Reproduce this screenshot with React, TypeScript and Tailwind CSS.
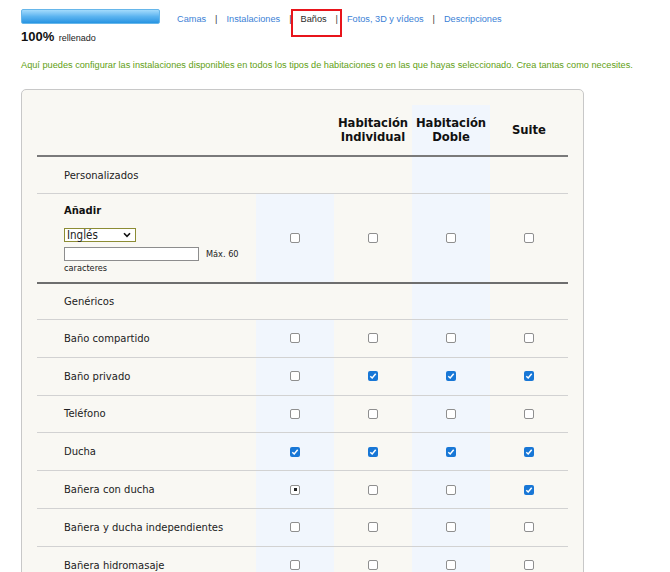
import React from 'react';

type Mark = 0 | 1 | 2;

const ROWS: { label: string; marks: Mark[] }[] = [
  { label: 'Baño compartido', marks: [0, 0, 0, 0] },
  { label: 'Baño privado', marks: [0, 1, 1, 1] },
  { label: 'Teléfono', marks: [0, 0, 0, 0] },
  { label: 'Ducha', marks: [1, 1, 1, 1] },
  { label: 'Bañera con ducha', marks: [2, 0, 0, 1] },
  { label: 'Bañera y ducha independientes', marks: [0, 0, 0, 0] },
  { label: 'Bañera hidromasaje', marks: [0, 0, 0, 0] },
];

const NAV = ['Camas', 'Instalaciones', 'Baños', 'Fotos, 3D y vídeos', 'Descripciones'];

function Box({ mark }: { mark: Mark }) {
  if (mark === 1) {
    return (
      <span className="w-[10px] h-[10px] rounded-[2px] bg-[#1877d6] flex items-center justify-center">
        <svg width="8" height="8" viewBox="0 0 8 8">
          <path d="M1.3 4.2 L3.2 6 L6.7 1.8" fill="none" stroke="#fff" strokeWidth="1.5" />
        </svg>
      </span>
    );
  }
  return (
    <span className="w-[10px] h-[10px] rounded-[2px] border border-[#8f8f8f] bg-white flex items-center justify-center">
      {mark === 2 && <span className="w-[3px] h-[3px] bg-[#222]" />}
    </span>
  );
}

function Cell({ blue, children }: { blue?: boolean; children?: React.ReactNode }) {
  return (
    <div className={`w-[78px] h-full flex items-center justify-center ${blue ? 'bg-[#f1f6fd]' : ''}`}>
      {children}
    </div>
  );
}

function CheckRow({ marks }: { marks: Mark[] }) {
  return (
    <>
      {marks.map((m, i) => (
        <Cell key={i} blue={i === 0 || i === 2}>
          <Box mark={m} />
        </Cell>
      ))}
    </>
  );
}

function SectionRow({ label, className }: { label: string; className: string }) {
  return (
    <div className={`flex ${className}`}>
      <div className="w-[219px] pl-[27px] flex items-center">{label}</div>
      <Cell />
      <Cell />
      <Cell blue />
      <Cell />
    </div>
  );
}

export default function App() {
  return (
    <div className="w-[670px] h-[572px] overflow-hidden bg-white relative font-['Liberation_Sans',Arial,sans-serif] text-[#222]">
      {/* progress + tabs */}
      <div className="flex pl-[21px] pt-[9px] h-[59px]">
        <div className="w-[139px]">
          <div className="h-[15px] rounded-[2px] border border-[#66b6ea] bg-linear-to-b from-[#a3dbfc] via-[#5bb4f0] to-[#2594e2]" />
          <div className="mt-[5px] leading-[13px] whitespace-nowrap">
            <span className="text-[13px] font-bold text-[#111]">100%</span>{' '}
            <span className="text-[9px]">rellenado</span>
          </div>
        </div>
        <nav className="ml-[17px] mt-[4px] h-[12px] flex items-center text-[9.2px] leading-[12px] whitespace-nowrap">
          {NAV.map((n, i) => (
            <React.Fragment key={n}>
              {i > 0 && <span className="mx-[9px] text-[#333]">|</span>}
              <span className={n === 'Baños' ? 'text-[#2a2a2a]' : 'text-[#3c7fd6]'}>{n}</span>
            </React.Fragment>
          ))}
        </nav>
      </div>
      <div className="absolute left-[291px] top-[9px] w-[51px] h-[28px] border-2 border-[#e8141b]" />

      <p className="pl-[21px] text-[9.2px] leading-[12px] text-[#62a013] whitespace-nowrap">
        Aquí puedes configurar las instalaciones disponibles en todos los tipos de habitaciones o en las que hayas seleccionado. Crea tantas como necesites.
      </p>

      {/* panel */}
      <div className="ml-[21px] mt-[18px] w-[563px] border border-[#c8c8c8] rounded-[5px] bg-[#f9f8f3] p-[15px] font-['DejaVu_Sans',Verdana,sans-serif] text-[10px]">
        <div className="w-[531px]">
          <div className="flex h-[52px] border-b-2 border-[#7a7a7a] font-bold text-[11.6px] leading-[14px] text-[#111] text-center">
            <div className="w-[219px]" />
            <Cell />
            <Cell>Habitación<br />Individual</Cell>
            <Cell blue>Habitación<br />Doble</Cell>
            <Cell>Suite</Cell>
          </div>

          <SectionRow label="Personalizados" className="h-[37px] border-b border-[#d2d2d2]" />

          <div className="flex h-[90px] border-b-2 border-[#6e6e6e]">
            <div className="w-[219px] pl-[27px] pt-[11px] flex flex-col">
              <div className="font-bold leading-[12px] text-[#111]">Añadir</div>
              <div className="mt-[11px] w-[72px] h-[14px] border border-[#8c8c34] bg-white flex items-center justify-between pl-[2px] pr-[4px]">
                <span className="font-['DejaVu_Sans_Condensed','DejaVu_Sans',sans-serif] text-[11.5px] leading-[12px]">Inglés</span>
                <svg width="8" height="6" viewBox="0 0 8 6">
                  <path d="M1 1.2 L4 4.3 L7 1.2" fill="none" stroke="#111" strokeWidth="1.6" />
                </svg>
              </div>
              <div className="mt-[5px] flex items-center">
                <div className="w-[135px] h-[14px] border border-[#8d8d8d] bg-white" />
                <span className="ml-[7px] text-[8.2px] leading-[10px]">Máx. 60</span>
              </div>
              <div className="mt-[2px] text-[8.2px] leading-[10px]">caracteres</div>
            </div>
            <CheckRow marks={[0, 0, 0, 0]} />
          </div>

          <SectionRow label="Genéricos" className="h-[36px] border-b border-[#d2d2d2]" />

          {ROWS.map((r) => (
            <div key={r.label} className="flex h-[37.8px] border-b border-[#d2d2d2]">
              <div className="w-[219px] pl-[27px] flex items-center">{r.label}</div>
              <CheckRow marks={r.marks} />
            </div>
          ))}
        </div>
      </div>
    </div>
  );
}
